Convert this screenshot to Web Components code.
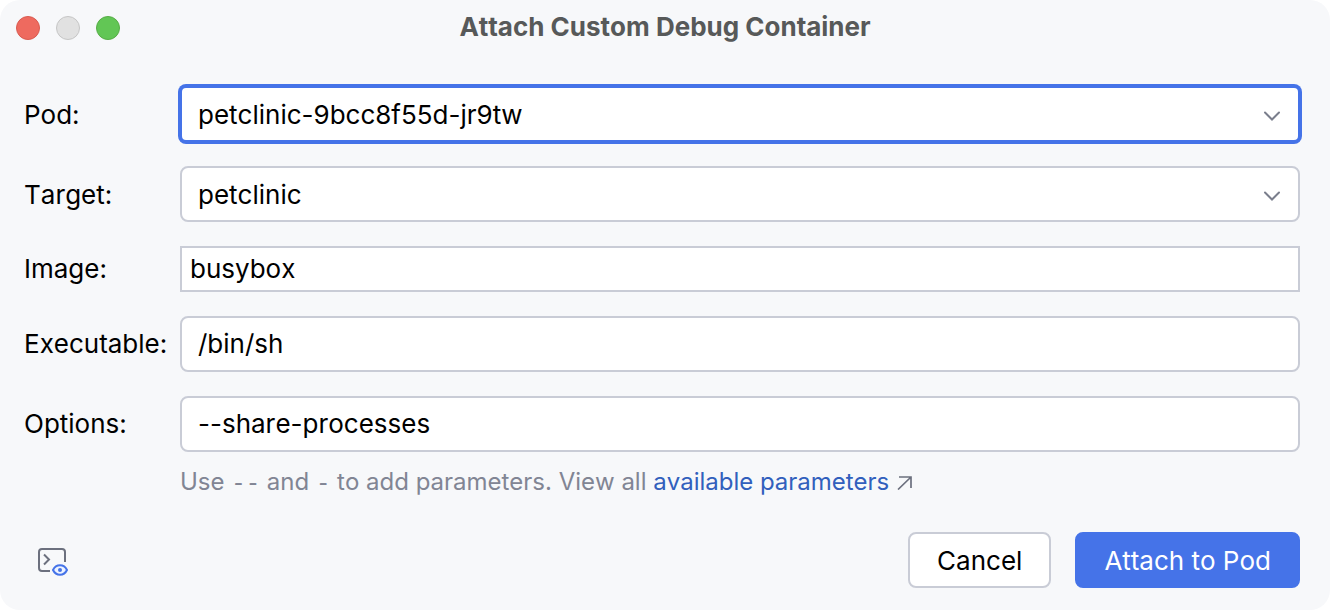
<!DOCTYPE html>
<html lang="en">
<head>
<meta charset="utf-8">
<title>Attach Custom Debug Container</title>
<style>
    body {
        margin: 0;
        background: #FFF;
        color: #000;
        font-family: Inter, "Liberation Sans", sans-serif;
        font-size: 26px;
        font-kerning: none;
        line-height: 32px;
        --border: #C9CCD6;
        --accent: #4573E8;
        --muted: #818594;
        --link: #315FBD;
    }
</style>
</head>
<body>
<dialog-window heading="Attach Custom Debug Container">
    <form-row label="Pod:" type="select" value="petclinic-9bcc8f55d-jr9tw" active></form-row>
    <form-row label="Target:" type="select" value="petclinic"></form-row>
    <form-row label="Image:" value="busybox" plain></form-row>
    <form-row label="Executable:" value="/bin/sh"></form-row>
    <form-row label="Options:" value="--share-processes">
        <hint-text slot="hint"></hint-text>
    </form-row>
    <preview-button slot="tools"></preview-button>
    <push-button slot="actions">Cancel</push-button>
    <push-button slot="actions" primary>Attach to Pod</push-button>
</dialog-window>

<script>
class DialogWindow extends HTMLElement {
    constructor() {
        super();
        this.attachShadow({ mode: "open" });
        this.shadowRoot.innerHTML = /*html*/`
        <style>
            :host {
                display: flex;
                flex-direction: column;
                box-sizing: border-box;
                min-height: 100vh;
                background: #F7F8FA;
                border-radius: 20px;
            }

            header {
                display: grid;
                grid-template-columns: 1fr auto 1fr;
                align-items: center;
                height: 56px;
                padding: 0 16px;
            }

            h1 {
                margin: 0;
                padding-bottom: 2px;
                color: #575959;
                font-size: 26px;
                font-weight: 700;
            }

            .lights {
                display: flex;
                gap: 16px;
            }

            .light {
                box-sizing: border-box;
                width: 24px;
                height: 24px;
                padding: 0;
                border: 1px solid #D95B50;
                border-radius: 50%;
                background: #EE6A5F;
            }

            .minimize {
                border-color: #C6C6C6;
                background: #E1E1E1;
            }

            .zoom {
                border-color: #57AD46;
                background: #62C655;
            }

            .rows {
                display: flex;
                flex-direction: column;
                gap: 24px;
                padding: 30px 30px 0 24px;
            }

            footer {
                display: flex;
                align-items: center;
                justify-content: space-between;
                margin-top: auto;
                padding: 0 30px 22px 36px;
            }

            .actions {
                display: flex;
                gap: 24px;
            }
        </style>
        <header>
            <div class="lights">
                <button class="light" type="button" aria-label="Close"></button>
                <button class="light minimize" type="button" aria-label="Minimize" disabled></button>
                <button class="light zoom" type="button" aria-label="Zoom"></button>
            </div>
            <h1></h1>
        </header>
        <div class="rows"><slot></slot></div>
        <footer>
            <slot name="tools"></slot>
            <div class="actions"><slot name="actions"></slot></div>
        </footer>
        `;
    }

    connectedCallback() {
        this.shadowRoot.querySelector("h1").textContent = this.getAttribute("heading");
    }
}

class FormRow extends HTMLElement {
    constructor() {
        super();
        this.attachShadow({ mode: "open" });
        this.shadowRoot.innerHTML = /*html*/`
        <style>
            :host {
                display: grid;
                grid-template-columns: 156px 1fr;
                align-items: center;
            }

            .field {
                display: grid;
                align-items: center;
            }

            .control, .chevron {
                grid-area: 1 / 1;
            }

            .control {
                box-sizing: border-box;
                width: 100%;
                height: 56px;
                margin: 0;
                padding: 0 16px;
                border: 2px solid var(--border);
                border-radius: 8px;
                outline: none;
                background: #FFF;
                color: inherit;
                font: inherit;
                font-kerning: inherit;
                appearance: none;
            }

            select.control {
                padding-top: 2px;
            }

            input.control {
                padding-bottom: 2px;
            }

            :host([plain]) .control {
                height: 46px;
                padding: 0 8px 2px;
                border-radius: 0;
            }

            :host([active]) .control {
                border-color: var(--accent);
                border-radius: 6px;
                box-shadow: 0 0 0 2px var(--accent);
            }

            :host([type="select"]) label {
                padding-top: 2px;
            }

            .chevron {
                justify-self: end;
                margin-right: 18px;
                pointer-events: none;
            }

            ::slotted([slot="hint"]) {
                grid-column: 2;
                margin-top: 14px;
            }
        </style>
        <label for="control"></label>
        <div class="field"></div>
        <slot name="hint"></slot>
        `;
    }

    connectedCallback() {
        let field = this.shadowRoot.querySelector(".field");
        this.shadowRoot.querySelector("label").textContent = this.getAttribute("label");

        if (this.getAttribute("type") == "select") {
            field.innerHTML = /*html*/`
                <select class="control" id="control"><option></option></select>
                <svg class="chevron" width="20" height="20" viewBox="0 0 20 20" fill="none" aria-hidden="true">
                    <path d="M3 8.500L10 15.500L17 8.500" stroke="#7A7E8C" stroke-width="2" stroke-linecap="round"/>
                </svg>
            `;
            field.querySelector("option").textContent = this.getAttribute("value");
        } else {
            field.innerHTML = `<input class="control" id="control" type="text" spellcheck="false">`;
            field.querySelector("input").value = this.getAttribute("value");
        }
    }
}

class HintText extends HTMLElement {
    constructor() {
        super();
        this.attachShadow({ mode: "open" });
        this.shadowRoot.innerHTML = /*html*/`
        <style>
            :host {
                display: block;
                color: var(--muted);
                font-size: 24px;
            }

            code {
                font-family: "Liberation Mono", monospace;
            }

            a {
                color: var(--link);
                text-decoration: none;
            }
        </style>
        Use <code>--</code> and <code>-</code> to add parameters. View all
        <a href="#">available parameters
            <svg width="16" height="16" viewBox="0 0 16 16" fill="none" aria-hidden="true">
                <path d="M3 3H15V14M15 3L2 15.500" stroke="#6C707E" stroke-width="1.700"/>
            </svg></a>
        `;
    }
}

class PreviewButton extends HTMLElement {
    constructor() {
        super();
        this.attachShadow({ mode: "open" });
        this.shadowRoot.innerHTML = /*html*/`
        <style>
            :host {
                display: block;
            }

            button {
                display: block;
                padding: 0;
                border: none;
                background: none;
            }

            svg {
                display: block;
            }
        </style>
        <button type="button" aria-label="Preview command">
            <svg width="32" height="32" viewBox="0 0 32 32" fill="none">
                <path d="M14 27H6Q3 27 3 24V8Q3 5 6 5H26Q29 5 29 8V18" stroke="#6C707E" stroke-width="2"/>
                <path d="M8 10.500L13 15.500L8 20.500" stroke="#6C707E" stroke-width="2"/>
                <path d="M17 26C20 19.700 28 19.700 31 26C28 32.300 20 32.300 17 26Z" fill="#EDF3FF" stroke="#4573E8" stroke-width="2"/>
                <circle cx="24" cy="26" r="2" fill="#4573E8"/>
            </svg>
        </button>
        `;
    }
}

class PushButton extends HTMLElement {
    constructor() {
        super();
        this.attachShadow({ mode: "open" });
        this.shadowRoot.innerHTML = /*html*/`
        <style>
            :host {
                display: block;
            }

            button {
                box-sizing: border-box;
                height: 56px;
                padding: 2px 27px 0;
                border: 2px solid var(--border);
                border-radius: 8px;
                background: #FFF;
                color: inherit;
                font: inherit;
                font-kerning: inherit;
            }

            :host([primary]) button {
                border-color: var(--accent);
                background: var(--accent);
                color: #FFF;
            }
        </style>
        <button type="button"><slot></slot></button>
        `;
    }
}

window.customElements.define("dialog-window", DialogWindow);
window.customElements.define("form-row", FormRow);
window.customElements.define("hint-text", HintText);
window.customElements.define("preview-button", PreviewButton);
window.customElements.define("push-button", PushButton);
</script>
</body>
</html>
